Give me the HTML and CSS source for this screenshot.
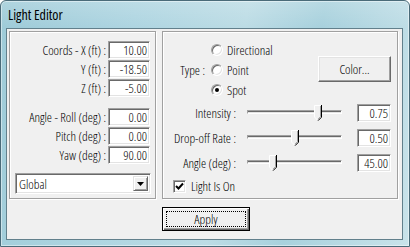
FILE: index.html
```html
<!DOCTYPE html>
<html>
<head>
<meta charset="utf-8">
<link rel="stylesheet" href="styles.css">
</head>
<body>
<div class="window">
  <div class="titlebar">Light Editor</div>
  <div class="client">
    <div class="groups">
      <div class="group group-left">
        <div class="fields">
          <span class="lbl">Coords - X (ft) :</span><span class="field">10.00</span>
          <span class="lbl">Y (ft) :</span><span class="field">-18.50</span>
          <span class="lbl">Z (ft) :</span><span class="field">-5.00</span>
        </div>
        <div class="fields fields-angles">
          <span class="lbl">Angle - Roll (deg) :</span><span class="field">0.00</span>
          <span class="lbl">Pitch (deg) :</span><span class="field">0.00</span>
          <span class="lbl">Yaw (deg) :</span><span class="field">90.00</span>
        </div>
        <div class="combo">
          <span class="combo-text">Global</span>
          <span class="combo-btn"><svg width="7" height="4" viewBox="0 0 7 4"><polygon points="0,0 7,0 3.5,4" fill="#000"/></svg></span>
        </div>
      </div>
      <div class="group group-right">
        <div class="type-section">
          <span class="type-label">Type :</span>
          <div class="radios">
            <div class="radio-row"><span class="radio"></span><span>Directional</span></div>
            <div class="radio-row"><span class="radio"></span><span>Point</span></div>
            <div class="radio-row"><span class="radio"><span class="dot"></span></span><span>Spot</span></div>
          </div>
          <div class="btn color-btn">Color...</div>
        </div>
        <div class="sliders">
          <div class="slider-row">
            <span class="slider-label">Intensity :</span>
            <div class="track-wrap">
              <div class="track"></div>
              <svg class="thumb" style="left: calc(75% - 4px)" width="8" height="16" viewBox="0 0 8 16"><polygon points="0,0 8,0 8,12 4,16 0,12" fill="#f0f0f0"/><polyline points="0.5,12 0.5,0.5 7,0.5" fill="none" stroke="#fff"/><polyline points="6.5,1 6.5,11.6 4,14.2" fill="none" stroke="#a0a0a0"/><polyline points="7.5,0 7.5,12.2 4,15.7" fill="none" stroke="#000"/><line x1="0.5" y1="12" x2="3.6" y2="15.2" stroke="#fff"/></svg>
            </div>
            <span class="field value">0.75</span>
          </div>
          <div class="slider-row">
            <span class="slider-label">Drop-off Rate :</span>
            <div class="track-wrap">
              <div class="track"></div>
              <svg class="thumb" style="left: calc(51% - 4px)" width="8" height="16" viewBox="0 0 8 16"><polygon points="0,0 8,0 8,12 4,16 0,12" fill="#f0f0f0"/><polyline points="0.5,12 0.5,0.5 7,0.5" fill="none" stroke="#fff"/><polyline points="6.5,1 6.5,11.6 4,14.2" fill="none" stroke="#a0a0a0"/><polyline points="7.5,0 7.5,12.2 4,15.7" fill="none" stroke="#000"/><line x1="0.5" y1="12" x2="3.6" y2="15.2" stroke="#fff"/></svg>
            </div>
            <span class="field value">0.50</span>
          </div>
          <div class="slider-row">
            <span class="slider-label">Angle (deg) :</span>
            <div class="track-wrap">
              <div class="track"></div>
              <svg class="thumb" style="left: calc(27% - 4px)" width="8" height="16" viewBox="0 0 8 16"><polygon points="0,0 8,0 8,12 4,16 0,12" fill="#f0f0f0"/><polyline points="0.5,12 0.5,0.5 7,0.5" fill="none" stroke="#fff"/><polyline points="6.5,1 6.5,11.6 4,14.2" fill="none" stroke="#a0a0a0"/><polyline points="7.5,0 7.5,12.2 4,15.7" fill="none" stroke="#000"/><line x1="0.5" y1="12" x2="3.6" y2="15.2" stroke="#fff"/></svg>
            </div>
            <span class="field value">45.00</span>
          </div>
        </div>
        <div class="check-row">
          <span class="checkbox"><svg width="9" height="9" viewBox="0 0 9 9"><polyline points="1,4 3.5,6.5 8,1.5" fill="none" stroke="#000" stroke-width="2"/></svg></span>
          <span>Light Is On</span>
        </div>
      </div>
    </div>
    <div class="footer">
      <div class="btn btn-default"><span class="focus">Apply</span></div>
    </div>
  </div>
</div>
</body>
</html>
```
FILE: styles.css
```css
html, body {
  margin: 0;
  padding: 0;
}
body {
  width: 410px;
  height: 247px;
  overflow: hidden;
  background: #ffffff;
  font-family: "Open Sans", "Liberation Sans", sans-serif;
  font-stretch: 75%;
  font-weight: 350;
  font-size: 13px;
  line-height: 16px;
  color: #000;
}
.window {
  box-sizing: border-box;
  width: 410px;
  height: 247px;
  border: 1px solid #4a6b79;
  border-radius: 6px 6px 0 0;
  padding: 0 6px 6px 5px;
  display: flex;
  flex-direction: column;
  background:
    linear-gradient(to bottom, rgba(255,255,255,0.18), rgba(255,255,255,0) 26px),
    linear-gradient(100deg, #9ecbd8 0%, #aed5e1 30%, #bcdce5 55%, #a8d1dd 72%, #c9e3ea 100%);
  box-shadow: inset 0 0 0 1px rgba(255,255,255,0.45);
}
.titlebar {
  height: 27px;
  line-height: 28px;
  padding-left: 2px;
  font-size: 14px;
  font-stretch: 85%;
  font-weight: 400;
  color: #000;
}
.client {
  box-sizing: border-box;
  height: 212px;
  border: 1px solid #62808c;
  background: #f0f0f0;
  padding: 2px 0 0 2px;
  display: flex;
  flex-direction: column;
}
.groups {
  display: flex;
  gap: 6px;
}
.group {
  box-sizing: border-box;
  height: 168px;
  border: 1px solid #a0a0a0;
  box-shadow: inset 1px 1px 0 #fff, 1px 1px 0 #fff;
}
.group-left {
  width: 147px;
  padding: 9px 5px 0 0;
}
.fields {
  display: grid;
  grid-template-columns: 1fr 42px;
  grid-auto-rows: 18px;
  column-gap: 2px;
  row-gap: 1px;
  align-items: center;
}
.fields-angles {
  margin-top: 11px;
}
.lbl {
  text-align: right;
  white-space: nowrap;
}
.field {
  box-sizing: border-box;
  height: 18px;
  line-height: 16px;
  background: #fff;
  border: 1px solid;
  border-color: #a0a0a0 #fff #fff #a0a0a0;
  box-shadow: inset 1px 1px 0 #696969, inset -1px -1px 0 #e3e3e3;
  text-align: right;
  padding-right: 2px;
}
.combo {
  box-sizing: border-box;
  margin: 9px 0 0 5px;
  width: 136px;
  height: 21px;
  background: #fff;
  border: 1px solid;
  border-color: #a0a0a0 #fff #fff #a0a0a0;
  box-shadow: inset 1px 1px 0 #696969, inset -1px -1px 0 #e3e3e3;
  display: flex;
  align-items: center;
  padding: 2px 2px 2px 3px;
}
.combo-text {
  flex: 1;
}
.combo-btn {
  box-sizing: border-box;
  width: 15px;
  height: 15px;
  background: #f0f0f0;
  border: 1px solid;
  border-color: #e3e3e3 #696969 #696969 #e3e3e3;
  box-shadow: inset 1px 1px 0 #fff, inset -1px -1px 0 #a0a0a0;
  display: flex;
  align-items: center;
  justify-content: center;
}
.group-right {
  width: 236px;
  padding: 8px 6px 0 0;
}
.type-section {
  display: flex;
  height: 60px;
}
.type-label {
  width: 42px;
  text-align: right;
  align-self: center;
}
.radios {
  display: flex;
  flex-direction: column;
  margin-left: 6px;
}
.radio-row {
  height: 20px;
  display: flex;
  align-items: center;
  gap: 4px;
}
.radio {
  box-sizing: border-box;
  width: 12px;
  height: 12px;
  border-radius: 50%;
  background: #fff;
  border: 1px solid;
  border-color: #a0a0a0 #fff #fff #a0a0a0;
  box-shadow: inset 1px 1px 0 #696969, inset -1px -1px 0 #e3e3e3;
  display: flex;
  align-items: center;
  justify-content: center;
}
.dot {
  width: 4px;
  height: 4px;
  border-radius: 50%;
  background: #000;
}
.btn {
  box-sizing: border-box;
  background: #f0f0f0;
  border: 1px solid;
  border-color: #fff #696969 #696969 #fff;
  box-shadow: inset -1px -1px 0 #a0a0a0, inset 1px 1px 0 #e3e3e3;
  display: flex;
  align-items: center;
  justify-content: center;
}
.color-btn {
  margin-left: auto;
  margin-top: 16px;
  width: 73px;
  height: 26px;
}
.sliders {
  display: flex;
  flex-direction: column;
  gap: 7px;
  margin-top: 4px;
}
.slider-row {
  display: flex;
  align-items: center;
  height: 18px;
}
.slider-label {
  width: 73px;
  text-align: right;
  white-space: nowrap;
}
.track-wrap {
  position: relative;
  margin-left: 11px;
  width: 95px;
  height: 18px;
}
.track {
  position: absolute;
  left: 0;
  right: 0;
  top: 6px;
  height: 4px;
  box-sizing: border-box;
  border: 1px solid;
  border-color: #a0a0a0 #fff #fff #a0a0a0;
  background: #e3e3e3;
  box-shadow: inset 0 1px 0 #696969;
}
.thumb {
  position: absolute;
  top: 1px;
}
.value {
  margin-left: 15px;
  width: 34px;
}
.check-row {
  display: flex;
  align-items: center;
  gap: 5px;
  height: 16px;
  margin-top: 6px;
  padding-left: 10px;
}
.checkbox {
  box-sizing: border-box;
  width: 13px;
  height: 13px;
  background: #fff;
  border: 1px solid;
  border-color: #a0a0a0 #fff #fff #a0a0a0;
  box-shadow: inset 1px 1px 0 #696969, inset -1px -1px 0 #e3e3e3;
  display: flex;
  align-items: center;
  justify-content: center;
}
.footer {
  display: flex;
  margin-top: 8px;
  padding-left: 153px;
}
.btn-default {
  width: 88px;
  height: 24px;
  border: 1px solid #000;
  box-shadow: inset 1px 1px 0 #fff, inset -1px -1px 0 #696969, inset -2px -2px 0 #a0a0a0;
  padding: 3px;
}
.focus {
  box-sizing: border-box;
  width: 100%;
  height: 100%;
  border: 1px dotted #000;
  display: flex;
  align-items: center;
  justify-content: center;
}
```
